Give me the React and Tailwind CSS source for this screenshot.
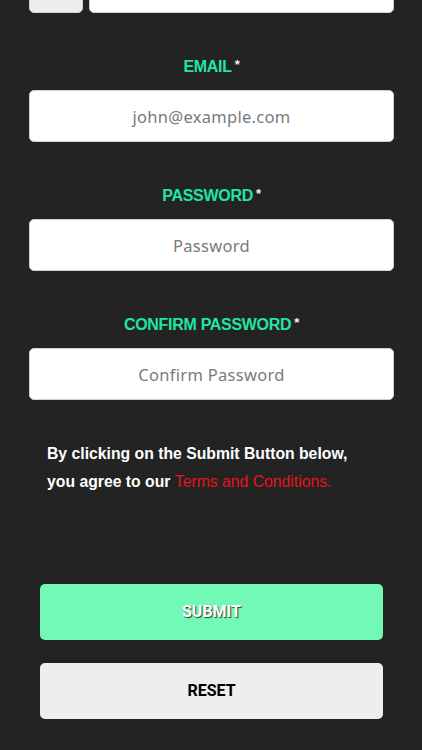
import React from "react";

function Field({ label, placeholder, type = "text" }) {
  return (
    <div className="mt-[42px] flex flex-col">
      <label className="flex h-[24px] items-center justify-center font-['Liberation_Sans',Arial,sans-serif] text-[16px] font-bold tracking-[-0.3px] text-[#1fe6a0]">
        {label}
        <span className="ml-[3px] -mt-[4px] text-[13px] text-[#f2f2f2]">*</span>
      </label>
      <input
        type={type}
        placeholder={placeholder}
        className="mt-[11px] h-[52px] w-full rounded-[5px] border border-[#d0d0d0] bg-white text-center font-['Noto_Sans',sans-serif] text-[16.5px] tracking-[0.3px] text-[#555] outline-none placeholder:text-[#7a7a7a]"
      />
    </div>
  );
}

export default function App() {
  return (
    <div className="min-h-[750px] w-full overflow-hidden bg-[#232323]">
      <div className="pl-[29px] pr-[28px]">
        <div className="-mt-[39px] flex h-[52px] gap-[6px]">
          <div className="w-[54px] rounded-[5px] border border-[#d0d0d0] bg-[#eeeeee]" />
          <div className="flex-1 rounded-[5px] border border-[#d0d0d0] bg-white" />
        </div>
        <Field label="EMAIL" placeholder="john@example.com" type="email" />
        <Field label="PASSWORD" placeholder="Password" type="password" />
        <Field label="CONFIRM PASSWORD" placeholder="Confirm Password" type="password" />
        <p className="mt-[40px] pl-[18px] font-['Liberation_Sans',Arial,sans-serif] text-[15.75px] font-bold leading-[28px] text-white">
          By clicking on the Submit Button below,
          <br />
          you agree to our{" "}
          <a className="font-normal text-[#e5141b]">Terms and Conditions.</a>
        </p>
        <div className="mt-[88px] flex flex-col gap-[23px] pl-[11px] pr-[11px]">
          <button className="h-[56px] w-full rounded-[5px] bg-[#73f9b6] font-['Roboto',sans-serif] text-[16px] font-bold text-white [text-shadow:1px_1px_1px_#333]">
            SUBMIT
          </button>
          <button className="h-[56px] w-full rounded-[5px] bg-[#eeeeee] font-['Roboto',sans-serif] text-[16px] font-bold text-black">
            RESET
          </button>
        </div>
      </div>
    </div>
  );
}
